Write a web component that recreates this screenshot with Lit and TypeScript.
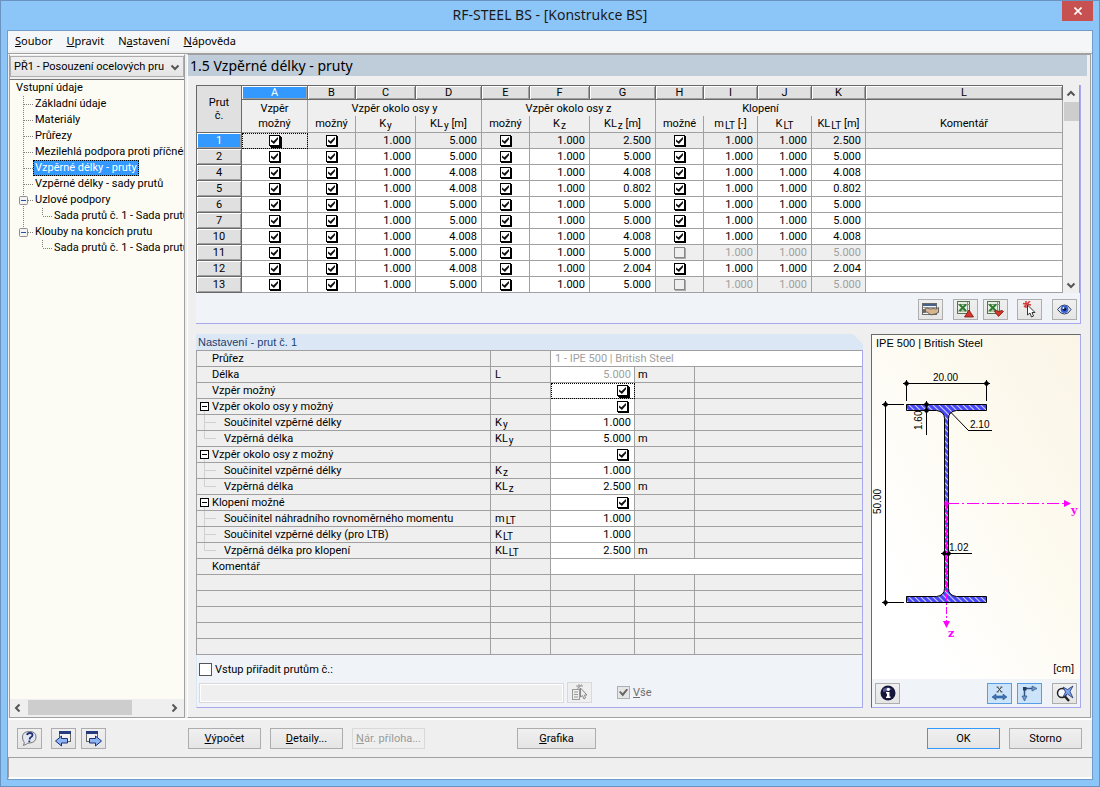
import { LitElement, html, svg, css, nothing } from "lit";
import { customElement } from "lit/decorators.js";
import { classMap } from "lit/directives/class-map.js";

type MemberRow = [string, string, string, string, string, boolean];

const MEMBERS: MemberRow[] = [
  ["1", "5.000", "2.500", "1.000", "2.500", true],
  ["2", "5.000", "5.000", "1.000", "5.000", true],
  ["4", "4.008", "4.008", "1.000", "4.008", true],
  ["5", "4.008", "0.802", "1.000", "0.802", true],
  ["6", "5.000", "5.000", "1.000", "5.000", true],
  ["7", "5.000", "5.000", "1.000", "5.000", true],
  ["10", "4.008", "4.008", "1.000", "4.008", true],
  ["11", "5.000", "5.000", "1.000", "5.000", false],
  ["12", "4.008", "2.004", "1.000", "2.004", true],
  ["13", "5.000", "5.000", "1.000", "5.000", false],
];

interface Setting {
  label: string;
  kind?: "group" | "mid" | "last";
  sym?: string;
  sub?: string;
  value?: string;
  check?: boolean;
  unit?: string;
  wide?: boolean;
  dim?: boolean;
  focus?: boolean;
}

const SETTINGS: Setting[] = [
  { label: "Průřez", value: "1 - IPE 500 | British Steel", wide: true, dim: true },
  { label: "Délka", sym: "L", value: "5.000", unit: "m", dim: true },
  { label: "Vzpěr možný", check: true, focus: true },
  { label: "Vzpěr okolo osy y možný", kind: "group", check: true },
  { label: "Součinitel vzpěrné délky", kind: "mid", sym: "K", sub: "y", value: "1.000" },
  { label: "Vzpěrná délka", kind: "last", sym: "KL", sub: "y", value: "5.000", unit: "m" },
  { label: "Vzpěr okolo osy z možný", kind: "group", check: true },
  { label: "Součinitel vzpěrné délky", kind: "mid", sym: "K", sub: "z", value: "1.000" },
  { label: "Vzpěrná délka", kind: "last", sym: "KL", sub: "z", value: "2.500", unit: "m" },
  { label: "Klopení možné", kind: "group", check: true },
  { label: "Součinitel náhradního rovnoměrného momentu", kind: "mid", sym: "m", sub: "LT", value: "1.000" },
  { label: "Součinitel vzpěrné délky (pro LTB)", kind: "mid", sym: "K", sub: "LT", value: "1.000" },
  { label: "Vzpěrná délka pro klopení", kind: "last", sym: "KL", sub: "LT", value: "2.500", unit: "m" },
  { label: "Komentář", value: "", wide: true },
];

const base = css`
  * { box-sizing: border-box; }
  button, select, input { font: inherit; color: inherit; margin: 0; }
  button {
    padding: 0;
    height: 21px;
    border: 1px solid #adadad;
    background: linear-gradient(#f0f0f0, #e5e5e5);
    display: inline-flex;
    align-items: center;
    justify-content: center;
    border-radius: 0;
  }
  button:disabled { border-color: #d9d9d9; background: #efefef; color: #9a9a9a; }
  svg { display: block; flex: none; }
  .icon { width: 25px; flex: none; }
  .tick {
    appearance: none;
    display: inline-grid;
    place-items: center;
    width: 11px;
    height: 11px;
    border: 1px solid #000;
    background: #fff;
    box-shadow: 1px 1px 0 #000;
    vertical-align: top;
  }
  .tick:checked::before {
    content: "";
    width: 7px;
    height: 7px;
    background: #111;
    clip-path: polygon(0 35%, 35% 60%, 100% 0, 100% 32%, 42% 100%, 0 66%);
  }
  .tick:disabled { border-color: #888; background: #efefef; box-shadow: 1px 1px 0 #aaa; }
  .strong { box-shadow: 1px 1px 0 #000, 2px 2px 0 #000; }
`;

const chevron = (dir: string) => {
  const d: Record<string, string> = {
    up: "M1.5 6.5 5 3l3.500 3.500",
    down: "M1.5 3.500 5 7l3.500-3.500",
    left: "M6.500 1.500 3 5l3.500 3.500",
    right: "M3.500 1.500 7 5 3.500 8.500",
  };
  return html`<svg width="10" height="10" viewBox="0 0 10 10" aria-hidden="true">
    <path d=${d[dir]} fill="none" stroke="#555" stroke-width="2"></path>
  </svg>`;
};

@customElement("nav-tree")
class NavTree extends LitElement {
  static styles = [base, css`
    :host { display: flex; flex-direction: column; min-width: 0; border: 1px solid #a0a0a0; border-top-color: #fff; border-left-color: #a0a0a0; background: #efefef; }
    .combo { display: grid; height: 23px; align-items: center; }
    .combo > * { grid-area: 1 / 1; }
    .combo svg { justify-self: end; margin-right: 4px; pointer-events: none; }
    select {
      appearance: none;
      width: 100%;
      min-width: 0;
      height: 21px;
      padding: 0 16px 0 3px;
      border: 1px solid #adadad;
      border-radius: 0;
      background: linear-gradient(#f0f0f0, #e5e5e5);
    }
    .tree { flex: 1; border-top: 1px solid #777; background: #fcfcf4; overflow: hidden; margin-top: 1px; }
    ul { list-style: none; margin: 0; padding: 0; }
    li { white-space: nowrap; }
    .row { display: flex; height: 16px; align-items: center; }
    .root { padding-left: 6px; }
    .one { padding-left: 8px; }
    .name { padding: 0 2px; height: 16px; line-height: 16px; }
    .on { background: #3399ff; color: #fff; outline: 1px dotted #000; outline-offset: -1px; }
    .bar { display: flex; height: 17px; align-items: center; padding: 0 5px 0 3px; margin-bottom: 1px; }
    .thumb { width: 104px; height: 15px; background: #cdcdcd; margin: 0 auto 0 5px; }
  `];

  private guide(level: number, end = false, box = false, rail = false) {
    const line = (d: string) => svg`<path d=${d} stroke="#808080" stroke-dasharray="1 1" fill="none"></path>`;
    if (level === 1) {
      return html`<svg width="15" height="16" viewBox="0 0 15 16" aria-hidden="true">
        ${line(end ? "M5.500 0v8" : "M5.500 0v16")}${line("M6 8.500h9")}
        ${box ? svg`<rect x="1.500" y="4.500" width="8" height="8" rx="1" fill="#f4f4f4" stroke="#8c8c8c"></rect><path d="M3 8.500h5" stroke="#2850a0"></path>` : nothing}
      </svg>`;
    }
    return html`<svg width="34" height="16" viewBox="0 0 34 16" aria-hidden="true">
      ${rail ? line("M5.500 0v16") : nothing}${line("M24.500 0v8")}${line("M25 8.500h9")}
    </svg>`;
  }

  render() {
    const leaf = (t: string, on = false) => html`<li class="row one">${this.guide(1)}<span class=${classMap({ name: true, on })}>${t}</span></li>`;
    const branch = (t: string, end: boolean) => html`<li>
      <div class="row one">${this.guide(1, end, true)}<span class="name">${t}</span></div>
      <ul><li class="row one">${this.guide(2, false, false, !end)}<span class="name">Sada prutů č. 1 - Sada prutů</span></li></ul>
    </li>`;
    return html`
      <div class="combo">
        <select aria-label="Případ"><option>PŘ1 - Posouzení ocelových pru</option></select>
        ${chevron("down")}
      </div>
      <nav class="tree">
        <div class="row root">Vstupní údaje</div>
        <ul>
          ${["Základní údaje", "Materiály", "Průřezy", "Mezilehlá podpora proti příčném"].map((t) => leaf(t))}
          ${leaf("Vzpěrné délky - pruty", true)} ${leaf("Vzpěrné délky - sady prutů")}
          ${branch("Uzlové podpory", false)} ${branch("Klouby na koncích prutu", true)}
        </ul>
      </nav>
      <div class="bar">${chevron("left")}<div class="thumb"></div>${chevron("right")}</div>
    `;
  }
}

@customElement("member-table")
class MemberTable extends LitElement {
  static styles = [base, css`
    :host { display: block; background: #f0f4f9; border-right: 1px solid #a8a8ec; border-bottom: 1px solid #a8a8ec; }
    .top { display: flex; background: #efefef; }
    table { flex: 1; min-width: 0; table-layout: fixed; border-collapse: separate; border-spacing: 0; border-left: 1px solid #696969; border-top: 1px solid #696969; }
    th, td { padding: 0; font-weight: normal; overflow: hidden; white-space: nowrap; border-right: 1px solid #a0a0a0; border-bottom: 1px solid #a0a0a0; height: 16px; line-height: 15px; text-align: center; }
    .w46 { width: 45px; } .w48 { width: 48px; } .w54 { width: 54px; } .w60 { width: 60px; } .w66 { width: 66px; }
    .letter { height: 14px; line-height: 12px; background: #e0e0e0; border-right-color: #696969; border-bottom-color: #696969; box-shadow: inset 1px 1px 0 #fff, inset -1px -1px 0 #a0a0a0; }
    .corner { background: #e0e0e0; border-right-color: #696969; border-bottom-color: #696969; line-height: 13px; }
    .title { height: 16px; border-bottom: 0; line-height: 15px; }
    .unit { height: 17px; line-height: 16px; border-bottom-color: #a0a0a0; }
    .id { background: #e0e0e0; border-right-color: #696969; border-bottom-color: #696969; box-shadow: inset 1px 1px 0 #fff, inset -1px -1px 0 #a0a0a0; }
    .blue { background: #3399ff; color: #fff; }
    td { background: #fff; }
    .num { text-align: right; padding-right: 4px; }
    .first td, .off { background: #ebebeb; }
    .off { background: #efefef; color: #a0a0a0; }
    .cursor { outline: 1px dotted #000; outline-offset: -1px; }
    .tick { margin-top: 2px; }
    sub { font-size: 10px; line-height: 0; vertical-align: -2px; margin-left: 1px; }
    .scroll { width: 17px; display: flex; flex-direction: column; align-items: center; padding: 4px 0 3px; border-right: 1px solid #a0a0a0; }
    .thumb { width: 15px; height: 19px; background: #cdcdcd; margin: 3px 0 auto; }
    .tools { display: flex; justify-content: flex-end; align-items: center; height: 30px; padding: 3px 3px 0 0; }
    .g5 { margin-left: 5px; } .g9 { margin-left: 9px; } .g10 { margin-left: 10px; }
  `];

  private box(on: boolean, name: string, strong = false, off = false) {
    return html`<input type="checkbox" class=${classMap({ tick: true, strong })} .checked=${on} ?disabled=${off} aria-label=${name} />`;
  }

  private sheet(tip: string) {
    return html`<svg width="17" height="17" viewBox="0 0 17 17" aria-hidden="true">
      <rect x=".5" y=".5" width="12" height="12" fill="#e8efe4" stroke="#56744e"></rect>
      <path d="M1 3.500h12M1 10h12M10.500 1v12" stroke="#7f9a78"></path>
      <path d="M2.500 3.500 9 10M9 3.500 2.500 10" stroke="#2c7a2c" stroke-width="2"></path>
      <path d=${tip} fill="#d5352b" stroke="#7d1712" stroke-width=".8"></path>
    </svg>`;
  }

  render() {
    const letters = "ABCDEFGHIJKL".split("");
    return html`
      <div class="top">
        <table>
          <colgroup>
            <col class="w46" /><col class="w66" /><col class="w48" /><col class="w60" /><col class="w66" /><col class="w48" /><col class="w60" />
            <col class="w66" /><col class="w48" /><col class="w54" /><col class="w54" /><col class="w54" /><col />
          </colgroup>
          <thead>
            <tr>
              <th class="corner" rowspan="3">Prut<br />č.</th>
              ${letters.map((l, i) => html`<th class=${classMap({ letter: true, blue: i === 0 })}>${l}</th>`)}
            </tr>
            <tr>
              <th class="title">Vzpěr</th>
              <th class="title" colspan="3">Vzpěr okolo osy y</th>
              <th class="title" colspan="3">Vzpěr okolo osy z</th>
              <th class="title" colspan="4">Klopení</th>
              <th class="title"></th>
            </tr>
            <tr>
              <th class="unit">možný</th>
              <th class="unit">možný</th><th class="unit">K<sub>y</sub></th><th class="unit">KL<sub>y</sub> [m]</th>
              <th class="unit">možný</th><th class="unit">K<sub>z</sub></th><th class="unit">KL<sub>z</sub> [m]</th>
              <th class="unit">možné</th><th class="unit">m<sub>LT</sub> [-]</th><th class="unit">K<sub>LT</sub></th><th class="unit">KL<sub>LT</sub> [m]</th>
              <th class="unit">Komentář</th>
            </tr>
          </thead>
          <tbody>
            ${MEMBERS.map(([id, ly, lz, k, llt, ltb], i) => {
              const num = classMap({ num: true, off: !ltb });
              return html`<tr class=${i === 0 ? "first" : ""}>
                <th class=${classMap({ id: true, blue: i === 0 })}>${id}</th>
                <td class=${i === 0 ? "cursor" : ""}>${this.box(true, "Vzpěr možný, prut " + id, i === 0)}</td>
                <td>${this.box(true, "Vzpěr y možný, prut " + id)}</td>
                <td class="num">1.000</td><td class="num">${ly}</td>
                <td>${this.box(true, "Vzpěr z možný, prut " + id)}</td>
                <td class="num">1.000</td><td class="num">${lz}</td>
                <td class=${ltb ? "" : "off"}>${this.box(ltb, "Klopení možné, prut " + id, false, !ltb)}</td>
                <td class=${num}>${k}</td><td class=${num}>1.000</td><td class=${num}>${llt}</td>
                <td></td>
              </tr>`;
            })}
          </tbody>
        </table>
        <div class="scroll">${chevron("up")}<div class="thumb"></div>${chevron("down")}</div>
      </div>
      <div class="tools">
        <button class="icon" aria-label="Vybrat z knihovny">
          <svg width="17" height="15" viewBox="0 0 17 15" aria-hidden="true">
            <rect x=".5" y="1.500" width="14" height="11" fill="#f5f5f5" stroke="#6b6b6b"></rect><path d="M1 2h13v2H1z" fill="#49628c"></path>
            <path d="M1 5.500h13" stroke="#999"></path>
            <path d="M0 8.500 5 6l3 1 3-.5 3 .5 2.500-1.500v5L13 12l-4 1-4-3-5 .5z" fill="#d8b48c" stroke="#4a4a4a" stroke-width=".8"></path>
            <path d="M0 8.500 4 7v3.500H0z" fill="#666"></path>
          </svg>
        </button>
        <button class="icon g10" aria-label="Export do Excelu">${this.sheet("M12 9 16.500 16H7.500z")}</button>
        <button class="icon g5" aria-label="Import z Excelu">${this.sheet("M11.500 15.500 7.500 10.500l2-1 1.500 1 4-1 1.500 1z")}</button>
        <button class="icon g9" aria-label="Vybrat v grafice">
          <svg width="15" height="17" viewBox="0 0 15 17" aria-hidden="true">
            <path d="M1 2.500 9 4M2 6 8 0M4 0v7" stroke="#d63a3a" stroke-width="1.500"></path>
            <path d="M5.500 4v10l2.500-2 1.500 4 2-1-1.500-3.500h3z" fill="#fff" stroke="#333"></path>
          </svg>
        </button>
        <button class="icon g10" aria-label="Náhled">
          <svg width="15" height="11" viewBox="0 0 15 11" aria-hidden="true">
            <path d="M.5 5.500Q3.500 1 7.500 1t6.500 4.500Q11.500 10 7.500 10T.5 5.500z" fill="#dfe8fb" stroke="#26355e"></path>
            <circle cx="7.500" cy="5.300" r="3.800" fill="#3760cf"></circle><circle cx="7.500" cy="5.300" r="1.800" fill="#0b1640"></circle><circle cx="6.500" cy="4" r=".9" fill="#fff"></circle>
          </svg>
        </button>
      </div>
    `;
  }
}

@customElement("settings-grid")
class SettingsGrid extends LitElement {
  static styles = [base, css`
    :host { display: flex; flex-direction: column; min-width: 0; }
    .head { height: 16px; line-height: 16px; padding-left: 2px; background: #dbe7f5; color: #1c3f6e; font-family: "Liberation Sans", Arial, sans-serif; clip-path: polygon(0 0, calc(100% - 10px) 0, 100% 10px, 100% 100%, 0 100%); }
    .body { flex: 1; background: #f0f4f9; border-right: 1px solid #a8a8ec; border-bottom: 1px solid #a8a8ec; border-left: 1px solid #dbe7f5; }
    table { width: calc(100% + 1px); margin-left: -1px; table-layout: fixed; border-collapse: separate; border-spacing: 0; border-top: 1px solid #a0a0a0; border-left: 1px solid #a0a0a0; background: #efefef; }
    .c1 { width: 294px; } .c2, .c4 { width: 60px; } .c3 { width: 84px; }
    th, td { padding: 0; height: 16px; line-height: 15px; border-bottom: 1px solid #a0a0a0; border-right: 1px solid #a0a0a0; font-weight: normal; text-align: left; white-space: nowrap; overflow: hidden; }
    td:last-child { border-right: 0; }
    .lab { display: flex; height: 15px; }
    .lab svg { width: 15px; }
    .deep svg { width: 27px; }
    .sym { padding-left: 4px; }
    sub { font-size: 10px; line-height: 0; vertical-align: -2px; margin-left: 1px; }
    .val { background: #fff; text-align: right; padding-right: 3px; }
    .wide { background: #fff; padding-left: 4px; }
    .dim { color: #a0a0a0; }
    .unit { padding-left: 3px; }
    .cursor { outline: 1px dotted #000; outline-offset: -1px; }
    .val .tick { margin: 2px 3px 0 0; }
    .assign { display: flex; align-items: center; height: 15px; margin: 7px 0 5px 2px; gap: 3px; }
    .box { appearance: none; width: 13px; height: 13px; background: #fff; border: 1px solid #555; display: grid; place-items: center; }
    .box:disabled { background: #e6e6e6; border-color: #b0b0b0; }
    .box:checked::before { content: ""; width: 9px; height: 8px; background: #666; clip-path: polygon(0 45%, 15% 30%, 40% 60%, 85% 0, 100% 15%, 42% 100%); }
    .line { display: flex; align-items: center; padding-left: 2px; }
    .field { flex: 1; max-width: 365px; height: 20px; border: 1px solid #d9d9d9; background: #efefef; box-shadow: inset 0 0 0 1px #fff; }
    .pick { margin-left: 3px; }
    .all { display: flex; align-items: center; gap: 3px; margin-left: 25px; color: #6d6d6d; }
  `];

  private branch(kind?: string) {
    if (kind === "group") {
      return html`<svg height="15" viewBox="0 0 15 15" aria-hidden="true"><rect x="3.500" y="3.500" width="8" height="8" fill="#fff" stroke="#000"></rect><path d="M5 7.500h5" stroke="#000"></path><path d="M7.500 12.500V15" stroke="#d0d0d0"></path></svg>`;
    }
    if (!kind) return html`<svg height="15" aria-hidden="true"></svg>`;
    return html`<svg height="15" viewBox="0 0 27 15" aria-hidden="true"><path d=${kind === "last" ? "M7.500 0v7.500H19" : "M7.500 0v15M8 7.500h11"} fill="none" stroke="#d0d0d0"></path></svg>`;
  }

  render() {
    return html`
      <div class="head">Nastavení - prut č. 1</div>
      <div class="body">
        <table>
          <colgroup><col class="c1" /><col class="c2" /><col class="c3" /><col class="c4" /><col /></colgroup>
          <tbody>
            ${SETTINGS.map((s) => html`<tr>
              <th><div class=${classMap({ lab: true, deep: s.kind === "mid" || s.kind === "last" })}>${this.branch(s.kind)}<span>${s.label}</span></div></th>
              <td class="sym">${s.sym}${s.sub ? html`<sub>${s.sub}</sub>` : nothing}</td>
              ${s.wide
                ? html`<td colspan="3" class=${classMap({ wide: true, dim: !!s.dim })}>${s.value}</td>`
                : html`<td class=${classMap({ val: true, dim: !!s.dim, cursor: !!s.focus })}>${s.check
                      ? html`<input type="checkbox" class=${classMap({ tick: true, strong: !!s.focus })} .checked=${true} aria-label=${s.label} />`
                      : s.value}</td>
                    <td class="unit">${s.unit}</td><td></td>`}
            </tr>`)}
            ${[0, 1, 2, 3, 4].map(() => html`<tr><td></td><td></td><td></td><td></td><td></td></tr>`)}
          </tbody>
        </table>
        <div class="assign"><input class="box" type="checkbox" id="assign" /><label for="assign">Vstup přiřadit prutům č.:</label></div>
        <div class="line">
          <input class="field" type="text" disabled aria-label="Čísla prutů" />
          <button class="icon pick" disabled aria-label="Vybrat pruty">
            <svg width="17" height="17" viewBox="0 0 17 17" aria-hidden="true">
              <rect x="1.500" y="5.500" width="7" height="10" fill="#eee" stroke="#999"></rect><path d="M3 8h4M3 10.500h4M3 13h4M5 2h7M6 4.500 11 .5M8 0v5" stroke="#999"></path>
              <path d="M9.500 4v9l2-1.500 1.500 3.500 1.500-1-1-3h2.500z" fill="#eee" stroke="#888"></path>
            </svg>
          </button>
          <label class="all"><input class="box" type="checkbox" checked disabled /><span><u>V</u>še</span></label>
        </div>
      </div>
    `;
  }
}

@customElement("section-view")
class SectionView extends LitElement {
  static styles = [base, css`
    :host { display: flex; flex-direction: column; border: 1px solid #a8a8ec; border-top-color: #696969; border-left-color: #696969; background: #f0f4f9; font-family: "Liberation Sans", Arial, sans-serif; }
    .pic { flex: 1; display: flex; flex-direction: column; background: linear-gradient(60deg, #fff 20%, #fdfaf0 60%, #faf5e6); }
    .name { height: 16px; line-height: 16px; padding-left: 4px; }
    .unit { text-align: right; padding: 0 6px 3px; margin-top: auto; line-height: 15px; }
    .draw { width: 100%; height: auto; font: 10px "Liberation Sans", Arial, sans-serif; }
    .axis { font: bold 11px "DejaVu Serif", "Courier New", serif; fill: #f0f; }
    .tools { display: flex; height: 28px; align-items: center; padding: 0 3px; gap: 5px; }
    .first { margin-right: auto; }
    .lit { background: #cce4f9; border-color: #559ee6; }
    .last { margin-left: 5px; }
  `];

  render() {
    const dot = (x: number, y: number) => svg`<path d="M${x - 3} ${y}l3-3 3 3-3 3z"></path>`;
    const dots = [[906.5, 383.5], [986.5, 383.5], [885.5, 404.5], [885.5, 602.5], [926.5, 404.5], [926.5, 410.5], [944.5, 553.5], [948.5, 553.5]];
    return html`
      <div class="pic">
        <div class="name">IPE 500 | British Steel</div>
        <svg class="draw" viewBox="872 351 208 300" role="img" aria-label="Průřez IPE 500">
          <defs>
            <pattern id="hatch" width="6" height="6" patternUnits="userSpaceOnUse">
              <rect width="6" height="6" fill="#4646f6"></rect><path d="M-1-1 7 7M-1 5 1 7M5-1 7 1" stroke="#c4c8ff" stroke-width="1.200"></path>
            </pattern>
          </defs>
          <path fill="url(#hatch)" stroke="#000" d="M906.500 404.500h80v6h-30q-8 1-8 8v170q0 7 8 8h30v6h-80v-6h30q8-1 8-8v-170q0-7-8-8h-30z"></path>
          <g fill="none" stroke="#000">
            <path d="M903 383.500h87M906.500 380v21M986.500 380v21M885.500 401v205M882 404.500h22M882 602.500h22M926.500 401v34M941 553.500h31M951 412.500l17 17.500"></path>
            <path d="M968 430.500h24"></path>
          </g>
          <g>${dots.map(([x, y]) => dot(x, y))}</g>
          <g stroke="#f0f" fill="none"><path d="M947 503.500h117" stroke-dasharray="12 3 2 3"></path><path d="M946.500 503v118" stroke-dasharray="7 2 2 2"></path></g>
          <path fill="#f0f" d="M944.500 501.500h4v4h-4zM1064 500l7 3.500-7 3.500zM943 621h7l-3.500 7z"></path>
          <text x="933" y="381">20.00</text>
          <text x="970" y="428">2.10</text>
          <text x="949" y="551">1.02</text>
          <text transform="translate(922 430) rotate(-90)">1.60</text>
          <text transform="translate(881 514) rotate(-90)">50.00</text>
          <text class="axis" x="1071" y="514">y</text>
          <text class="axis" x="948" y="637">z</text>
        </svg>
        <div class="unit">[cm]</div>
      </div>
      <div class="tools">
        <button class="icon first" aria-label="Informace">
          <svg width="16" height="16" viewBox="0 0 16 16" aria-hidden="true"><circle cx="8" cy="8" r="7.500" fill="#15163c"></circle><path d="M3 4q4-3 9 0-4 3-9 3z" fill="#6d76b8" opacity=".7"></path><circle cx="8.300" cy="4.300" r="1.600" fill="#fff"></circle><path d="M6 7h3.500v4.500h1V13H6v-1.500h1v-3H6z" fill="#fff"></path></svg>
        </button>
        <button class="icon lit" aria-label="Kóty">
          <svg width="17" height="15" viewBox="0 0 17 15" aria-hidden="true"><path d="M6.500 1l4 5M10.500 1l-4 5" stroke="#333"></path><path d="M5.500 1h2M9.500 1h2M5.500 6h2M9.500 6h2" stroke="#333" stroke-width=".8"></path><path d="M1 11l4-3v2h7V8l4 3-4 3v-2H5v2z" fill="#3f74b8" stroke="#26548c" stroke-width=".6"></path></svg>
        </button>
        <button class="icon lit" aria-label="Osy">
          <svg width="17" height="17" viewBox="0 0 17 17" aria-hidden="true"><path d="M3.500 13V3.500H13" fill="none" stroke="#33557f" stroke-width="1.500"></path><path d="M11 1l5 2.500L11 6zM1 11h5l-2.500 5z" fill="#6b9ad4" stroke="#33557f" stroke-width=".7"></path><rect x="2" y="2" width="3.500" height="3.500" fill="#223a5c"></rect></svg>
        </button>
        <button class="icon last" aria-label="Celý pohled">
          <svg width="18" height="17" viewBox="0 0 18 17" aria-hidden="true"><circle cx="6" cy="8" r="4.500" fill="#f6f9ff" stroke="#222" stroke-width="1.500"></circle><path d="M9 11.500 13 16" stroke="#222" stroke-width="2.500"></path><path d="M7 2l4.500 2.500L17 1l-3 5.500 3 6.500-5.500-4L7 12l2.500-5z" fill="#7fa4ee" stroke="#1d3473" stroke-width=".8"></path></svg>
        </button>
      </div>
    `;
  }
}

@customElement("app-root")
class AppRoot extends LitElement {
  static styles = [base, css`
    :host { display: block; font: 11px/16px Roboto, "Liberation Sans", Arial, sans-serif; color: #000; }
    .window { min-height: 100vh; display: flex; flex-direction: column; background: #8cc6f9; border: 1px solid #6a94bf; padding: 0 6px 6px; }
    .caption { height: 29px; display: grid; grid-template-columns: 31px 1fr 31px; font: 14px/28px "Noto Sans", sans-serif; text-align: center; color: #1a1a1a; }
    .close { height: 20px; background: #c75050; border: 0; }
    .client { flex: 1; display: flex; flex-direction: column; border: 1px solid #6f9cc8; background: #efefef; }
    .menu { display: flex; gap: 14px; height: 20px; padding: 0 7px; background: #f5f6f7; font: 11px/20px "Noto Sans", sans-serif; }
    .menu a { color: #000; text-decoration: none; }
    .main { flex: 1; display: flex; gap: 2px; margin-top: 2px; padding: 0 1px; border-top: 1px solid #a0a0a0; border-bottom: 2px solid #fff; }
    nav-tree { width: 176px; flex: none; }
    .page { flex: 1; min-width: 0; display: flex; flex-direction: column; border: 1px solid #a0a0a0; border-left: 1px solid #fff; padding: 0 3px 9px 0; }
    h1 { margin: 0 0 9px; height: 21px; background: #bfcddb; padding-left: 2px; font: 14px/21px "Noto Sans", sans-serif; }
    .stack { flex: 1; display: flex; flex-direction: column; gap: 10px; padding: 0 6px 0 8px; }
    .lower { flex: 1; display: flex; gap: 8px; }
    settings-grid { flex: 1; }
    section-view { width: 210px; flex: none; }
    .buttons { display: flex; align-items: center; height: 37px; padding: 0 10px 0 9px; }
    .text { width: 73px; height: 21px; }
    .g4 { margin-left: 5px; } .g9 { margin-left: 9px; }
    .calc { margin-left: 82px; } .graph { margin-left: 92px; width: 79px; } .ok { margin-left: auto; border-color: #3399ff; }
    .status { height: 22px; border-top: 1px solid #a0a0a0; border-left: 1px solid #a0a0a0; border-bottom: 2px solid #fff; }
  `];

  private pageIcon(back: boolean) {
    return html`<svg width="17" height="17" viewBox="0 0 17 17" aria-hidden="true">
      <g transform=${back ? "matrix(-1 0 0 1 17 0)" : ""}>
        <rect x="1.500" y="1.500" width="11" height="10" fill="#f1f1f1" stroke="#666"></rect><path d="M1 1h12v3H1z" fill="#263a80"></path>
        <path d="M4.500 8.500h6V6l6 5-6 5v-3h-6z" fill="#8db4f0" stroke="#1a2f80"></path>
      </g>
    </svg>`;
  }

  render() {
    return html`
      <div class="window">
        <header class="caption">
          <span></span><span>RF-STEEL BS - [Konstrukce BS]</span>
          <button class="close" aria-label="Zavřít"><svg width="8" height="8" viewBox="0 0 8 8" aria-hidden="true"><path d="M.5.500l7 7M7.500.5l-7 7" stroke="#fff" stroke-width="1.600"></path></svg></button>
        </header>
        <div class="client">
          <nav class="menu">
            <a href="#"><u>S</u>oubor</a><a href="#"><u>U</u>pravit</a><a href="#">N<u>a</u>stavení</a><a href="#"><u>N</u>ápověda</a>
          </nav>
          <div class="main">
            <nav-tree></nav-tree>
            <main class="page">
              <h1>1.5 Vzpěrné délky - pruty</h1>
              <div class="stack">
                <member-table></member-table>
                <div class="lower"><settings-grid></settings-grid><section-view></section-view></div>
              </div>
            </main>
          </div>
          <div class="buttons">
            <button class="icon" aria-label="Nápověda">
              <svg width="17" height="17" viewBox="0 0 17 17" aria-hidden="true"><path d="M8.500 1.500q6.500 0 6.500 5.500t-6.500 6q-2 0-3 1l-3 1.500.8-3Q1.500 10.500 1.500 7q0-5.500 7-5.500z" fill="#e4e8f0" stroke="#777"></path><path d="M6 5q.5-2 3-2t2.500 2q0 1.500-2 2.500-.8.500-.8 2M8.300 10.500v1.800" fill="none" stroke="#1f2f78" stroke-width="1.800"></path></svg>
            </button>
            <button class="icon g9" aria-label="Předchozí">${this.pageIcon(true)}</button>
            <button class="icon g4" aria-label="Další">${this.pageIcon(false)}</button>
            <button class="text calc"><span><u>V</u>ýpočet</span></button>
            <button class="text g9"><span><u>D</u>etaily...</span></button>
            <button class="text g9" disabled><span><u>N</u>ár. příloha...</span></button>
            <button class="text graph"><span><u>G</u>rafika</span></button>
            <button class="text ok">OK</button>
            <button class="text g9">Storno</button>
          </div>
          <div class="status"></div>
        </div>
      </div>
    `;
  }
}
